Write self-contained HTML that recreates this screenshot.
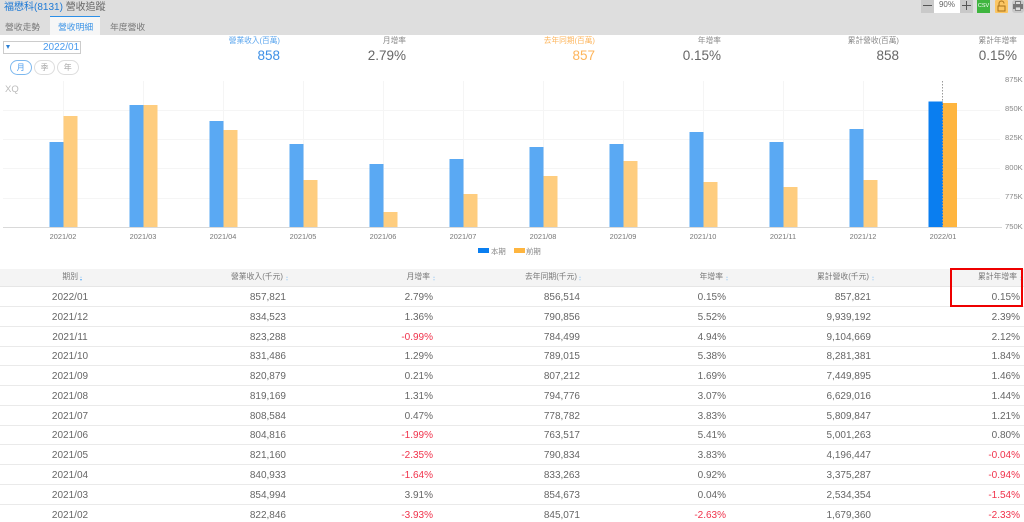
<!DOCTYPE html>
<html><head><meta charset="utf-8">
<style>
html,body{margin:0;padding:0;background:#fff;width:1024px;height:522px;overflow:hidden}
body{position:relative;font-family:"Liberation Sans","Noto Sans CJK TC",sans-serif;color:#666}
#w{position:absolute;left:0;top:0;width:1024px;height:522px;filter:blur(.3px)}
.a{position:absolute;white-space:nowrap}
.tab{position:absolute;top:20px;font-size:8.8px;line-height:14px;color:#777}
.sl{position:absolute;top:36px;font-size:7.7px;line-height:10px;white-space:nowrap;transform:translateX(-100%);color:#888}
.sv{position:absolute;top:48px;font-size:13.5px;line-height:16px;white-space:nowrap;transform:translateX(-100%);color:#666}
.pill{position:absolute;top:60px;height:13px;border:1px solid #ddd;border-radius:8px;font-size:8px;line-height:13px;text-align:center;color:#aaa}
.xl{position:absolute;top:232px;width:40px;text-align:center;font-size:7.4px;line-height:10px;color:#777}
.yl{position:absolute;left:1005px;font-size:7.6px;line-height:10px;color:#888}
.hd{position:absolute;top:271px;font-size:7.8px;line-height:12px;white-space:nowrap;transform:translateX(-100%);color:#777}
.so{position:absolute;top:276px;width:3px;height:7px;font-size:0}
.so:before{content:"";position:absolute;left:0;top:0;border:1.5px solid transparent;border-top:0;border-bottom:2px solid #bcd9f3}
.so:after{content:"";position:absolute;left:0;top:3px;border:1.5px solid transparent;border-bottom:0;border-top:2px solid #bcd9f3}
.so.on:after{border-top-color:#5aa9f3}
.row{position:absolute;left:0;width:1024px;height:19px;border-bottom:1px solid #eaeaea;font-size:10px;line-height:21px;color:#666}
.row span{position:absolute;top:0;white-space:nowrap;transform:translateX(-100%)}
.row .d{left:70px;transform:translateX(-50%)}
.c2{left:286px}.c3{left:433px}.c4{left:580px}.c5{left:726px}.c6{left:871px}.c7{left:1020px}
.row .n{color:#f0324b}
</style></head><body><div id="w">

<div class="a" style="left:0;top:0;width:1024px;height:35px;background:#dedede"></div>
<div class="a" style="left:4px;top:1px;font-size:10px;line-height:13px;color:#1e7ad6">福懋科(8131) <span style="color:#666">營收追蹤</span></div>
<div class="a" style="left:50px;top:16px;width:50px;height:19px;background:#f6f6f6;border-top:1px solid #2b8fe8;box-sizing:border-box"></div>
<div class="tab" style="left:5px">營收走勢</div>
<div class="tab" style="left:58px;color:#3d94e6">營收明細</div>
<div class="tab" style="left:110px">年度營收</div>

<!-- toolbar -->
<div class="a" style="left:921px;top:0;width:13px;height:13px;background:#c9c9c9"></div>
<div class="a" style="left:923px;top:5px;width:9px;height:1px;background:#555"></div>
<div class="a" style="left:934px;top:0;width:26px;height:13px;background:#fff;font-size:8px;line-height:10px;text-align:center;color:#666">90%</div>
<div class="a" style="left:960px;top:0;width:13px;height:13px;background:#c9c9c9"></div>
<div class="a" style="left:962px;top:5px;width:9px;height:1px;background:#555"></div>
<div class="a" style="left:966px;top:1px;width:1px;height:9px;background:#555"></div>
<div class="a" style="left:977px;top:0;width:13px;height:13px;background:#3fb53f;color:#fff;font-size:5.5px;line-height:13px;text-align:center">CSV</div>
<svg class="a" style="left:995px;top:0" width="13" height="13" viewBox="0 0 13 13"><rect width="13" height="13" rx="1" fill="#fcc663"/><path d="M4 6V3.5a2.5 2.5 0 0 1 5 0" fill="none" stroke="#a8721a" stroke-width="1"/><rect x="3" y="6" width="7" height="5" fill="#fcc663" stroke="#a8721a" stroke-width="1"/></svg>
<svg class="a" style="left:1012px;top:0" width="12" height="13" viewBox="0 0 12 13"><rect width="12" height="13" rx="3" fill="#c9c9c9"/><rect x="3.5" y="1.5" width="5" height="3" fill="#ddd" stroke="#777"/><rect x="1" y="4" width="10" height="5" fill="#777"/><rect x="3.5" y="7" width="5" height="3.5" fill="#ddd" stroke="#777" stroke-width=".8"/></svg>

<!-- controls -->
<div class="a" style="left:3px;top:41px;width:78px;height:13px;border:1px solid #ccc;box-sizing:border-box"></div>
<div class="a" style="left:6px;top:45px;width:0;height:0;border:2px solid transparent;border-top:4px solid #2b7fd4;border-bottom:0"></div>
<div class="a" style="left:43px;top:41px;font-size:10px;line-height:14px;color:#4a9bee">2022/01</div>
<div class="pill" style="left:10px;width:19.5px;border-color:#7db8ee;color:#4a9bee">月</div>
<div class="pill" style="left:34px;width:19px">季</div>
<div class="pill" style="left:57px;width:19.5px">年</div>

<!-- stats -->
<div class="sl" style="left:280px;color:#5aa5ee">營業收入(百萬)</div><div class="sv" style="left:280px;color:#3d8fe6">858</div>
<div class="sl" style="left:406px">月增率</div><div class="sv" style="left:406px">2.79%</div>
<div class="sl" style="left:595px;color:#fdb55c">去年同期(百萬)</div><div class="sv" style="left:595px;color:#fdb55c">857</div>
<div class="sl" style="left:721px">年增率</div><div class="sv" style="left:721px">0.15%</div>
<div class="sl" style="left:899px">累計營收(百萬)</div><div class="sv" style="left:899px">858</div>
<div class="sl" style="left:1017px">累計年增率</div><div class="sv" style="left:1017px">0.15%</div>

<!-- chart -->
<svg class="a" style="left:0;top:0" width="1024" height="260" viewBox="0 0 1024 260">
<g stroke="#f5f5f5" stroke-width="1">
<path d="M3 110.5H1000M3 139.5H1000M3 168.5H1000M3 198.5H1000"/>
<path d="M63.5 81V227M143.5 81V227M223.5 81V227M303.5 81V227M383.5 81V227M463.5 81V227M543.5 81V227M623.5 81V227M703.5 81V227M783.5 81V227M863.5 81V227"/>
</g>
<g fill="#5aa9f3">
<rect x="49.5" y="142" width="14" height="85"/>
<rect x="129.5" y="105" width="14" height="122"/>
<rect x="209.5" y="121" width="14" height="106"/>
<rect x="289.5" y="144" width="14" height="83"/>
<rect x="369.5" y="164" width="14" height="63"/>
<rect x="449.5" y="159" width="14" height="68"/>
<rect x="529.5" y="147" width="14" height="80"/>
<rect x="609.5" y="144" width="14" height="83"/>
<rect x="689.5" y="132" width="14" height="95"/>
<rect x="769.5" y="142" width="14" height="85"/>
<rect x="849.5" y="129" width="14" height="98"/>
</g>
<g fill="#fecd7f">
<rect x="63.5" y="116" width="14" height="111"/>
<rect x="143.5" y="105" width="14" height="122"/>
<rect x="223.5" y="130" width="14" height="97"/>
<rect x="303.5" y="180" width="14" height="47"/>
<rect x="383.5" y="212" width="14" height="15"/>
<rect x="463.5" y="194" width="14" height="33"/>
<rect x="543.5" y="176" width="14" height="51"/>
<rect x="623.5" y="161" width="14" height="66"/>
<rect x="703.5" y="182" width="14" height="45"/>
<rect x="783.5" y="187" width="14" height="40"/>
<rect x="863.5" y="180" width="14" height="47"/>
</g>
<rect x="928.5" y="101.5" width="14.5" height="125.5" fill="#0a7ef0"/>
<rect x="943" y="103" width="14" height="124" fill="#feb53f"/>
<path d="M942.5 81V227" stroke="#9a9a9a" stroke-width="1" stroke-dasharray="1.5 1.5" fill="none"/>
<path d="M3 227.5H1002" stroke="#d9d9d9" stroke-width="1"/>
<rect x="478" y="248" width="11" height="5" fill="#0a7ef0"/>
<rect x="514" y="248" width="11" height="5" fill="#feb53f"/>
</svg>
<div class="a" style="left:5px;top:84px;font-size:9.5px;line-height:11px;color:#bbb">XQ</div>
<div class="yl" style="top:75px">875K</div>
<div class="yl" style="top:104px">850K</div>
<div class="yl" style="top:133px">825K</div>
<div class="yl" style="top:163px">800K</div>
<div class="yl" style="top:192px">775K</div>
<div class="yl" style="top:222px">750K</div>
<div class="xl" style="left:43px">2021/02</div>
<div class="xl" style="left:123px">2021/03</div>
<div class="xl" style="left:203px">2021/04</div>
<div class="xl" style="left:283px">2021/05</div>
<div class="xl" style="left:363px">2021/06</div>
<div class="xl" style="left:443px">2021/07</div>
<div class="xl" style="left:523px">2021/08</div>
<div class="xl" style="left:603px">2021/09</div>
<div class="xl" style="left:683px">2021/10</div>
<div class="xl" style="left:763px">2021/11</div>
<div class="xl" style="left:843px">2021/12</div>
<div class="xl" style="left:923px">2022/01</div>
<div class="a" style="left:491px;top:247px;font-size:7.4px;line-height:10px;color:#888">本期</div>
<div class="a" style="left:526px;top:247px;font-size:7.4px;line-height:10px;color:#888">前期</div>

<!-- table -->
<div class="a" style="left:0;top:269px;width:1024px;height:17px;background:#f4f4f4;border-bottom:1px solid #e6e6e6"></div>
<div class="hd" style="left:78px">期別</div><div class="so on" style="left:80px"></div>
<div class="hd" style="left:283px">營業收入(千元)</div><div class="so" style="left:286px"></div>
<div class="hd" style="left:430px">月增率</div><div class="so" style="left:433px"></div>
<div class="hd" style="left:577px">去年同期(千元)</div><div class="so" style="left:579px"></div>
<div class="hd" style="left:723px">年增率</div><div class="so" style="left:726px"></div>
<div class="hd" style="left:869px">累計營收(千元)</div><div class="so" style="left:872px"></div>
<div class="hd" style="left:1017px">累計年增率</div><div class="so" style="left:1020px"></div>

<div class="row" style="top:287px"><span class="d">2022/01</span><span class="c2">857,821</span><span class="c3">2.79%</span><span class="c4">856,514</span><span class="c5">0.15%</span><span class="c6">857,821</span><span class="c7">0.15%</span></div>
<div class="row" style="top:307px"><span class="d">2021/12</span><span class="c2">834,523</span><span class="c3">1.36%</span><span class="c4">790,856</span><span class="c5">5.52%</span><span class="c6">9,939,192</span><span class="c7">2.39%</span></div>
<div class="row" style="top:327px"><span class="d">2021/11</span><span class="c2">823,288</span><span class="c3 n">-0.99%</span><span class="c4">784,499</span><span class="c5">4.94%</span><span class="c6">9,104,669</span><span class="c7">2.12%</span></div>
<div class="row" style="top:346px"><span class="d">2021/10</span><span class="c2">831,486</span><span class="c3">1.29%</span><span class="c4">789,015</span><span class="c5">5.38%</span><span class="c6">8,281,381</span><span class="c7">1.84%</span></div>
<div class="row" style="top:366px"><span class="d">2021/09</span><span class="c2">820,879</span><span class="c3">0.21%</span><span class="c4">807,212</span><span class="c5">1.69%</span><span class="c6">7,449,895</span><span class="c7">1.46%</span></div>
<div class="row" style="top:386px"><span class="d">2021/08</span><span class="c2">819,169</span><span class="c3">1.31%</span><span class="c4">794,776</span><span class="c5">3.07%</span><span class="c6">6,629,016</span><span class="c7">1.44%</span></div>
<div class="row" style="top:406px"><span class="d">2021/07</span><span class="c2">808,584</span><span class="c3">0.47%</span><span class="c4">778,782</span><span class="c5">3.83%</span><span class="c6">5,809,847</span><span class="c7">1.21%</span></div>
<div class="row" style="top:425px"><span class="d">2021/06</span><span class="c2">804,816</span><span class="c3 n">-1.99%</span><span class="c4">763,517</span><span class="c5">5.41%</span><span class="c6">5,001,263</span><span class="c7">0.80%</span></div>
<div class="row" style="top:445px"><span class="d">2021/05</span><span class="c2">821,160</span><span class="c3 n">-2.35%</span><span class="c4">790,834</span><span class="c5">3.83%</span><span class="c6">4,196,447</span><span class="c7 n">-0.04%</span></div>
<div class="row" style="top:465px"><span class="d">2021/04</span><span class="c2">840,933</span><span class="c3 n">-1.64%</span><span class="c4">833,263</span><span class="c5">0.92%</span><span class="c6">3,375,287</span><span class="c7 n">-0.94%</span></div>
<div class="row" style="top:485px"><span class="d">2021/03</span><span class="c2">854,994</span><span class="c3">3.91%</span><span class="c4">854,673</span><span class="c5">0.04%</span><span class="c6">2,534,354</span><span class="c7 n">-1.54%</span></div>
<div class="row" style="top:505px;border-bottom:0"><span class="d">2021/02</span><span class="c2">822,846</span><span class="c3 n">-3.93%</span><span class="c4">845,071</span><span class="c5 n">-2.63%</span><span class="c6">1,679,360</span><span class="c7 n">-2.33%</span></div>

<div class="a" style="left:950px;top:268px;width:73px;height:39px;border:2px solid #ee0000;box-sizing:border-box"></div>
</div></body></html>
